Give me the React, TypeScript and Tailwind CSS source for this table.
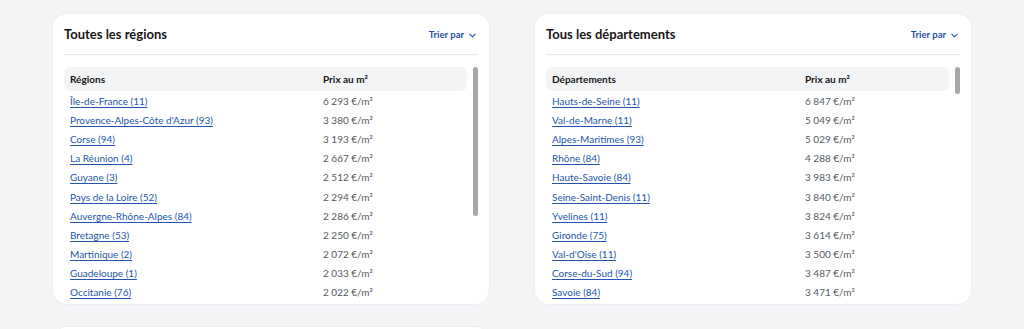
import React from "react";
import { ChevronDown } from "lucide-react";

type Row = { name: string; price: string };

const regions: Row[] = [
  { name: "Île-de-France (11)", price: "6 293 €/m²" },
  { name: "Provence-Alpes-Côte d'Azur (93)", price: "3 380 €/m²" },
  { name: "Corse (94)", price: "3 193 €/m²" },
  { name: "La Réunion (4)", price: "2 667 €/m²" },
  { name: "Guyane (3)", price: "2 512 €/m²" },
  { name: "Pays de la Loire (52)", price: "2 294 €/m²" },
  { name: "Auvergne-Rhône-Alpes (84)", price: "2 286 €/m²" },
  { name: "Bretagne (53)", price: "2 250 €/m²" },
  { name: "Martinique (2)", price: "2 072 €/m²" },
  { name: "Guadeloupe (1)", price: "2 033 €/m²" },
  { name: "Occitanie (76)", price: "2 022 €/m²" },
];

const departements: Row[] = [
  { name: "Hauts-de-Seine (11)", price: "6 847 €/m²" },
  { name: "Val-de-Marne (11)", price: "5 049 €/m²" },
  { name: "Alpes-Maritimes (93)", price: "5 029 €/m²" },
  { name: "Rhône (84)", price: "4 288 €/m²" },
  { name: "Haute-Savoie (84)", price: "3 983 €/m²" },
  { name: "Seine-Saint-Denis (11)", price: "3 840 €/m²" },
  { name: "Yvelines (11)", price: "3 824 €/m²" },
  { name: "Gironde (75)", price: "3 614 €/m²" },
  { name: "Val-d'Oise (11)", price: "3 500 €/m²" },
  { name: "Corse-du-Sud (94)", price: "3 487 €/m²" },
  { name: "Savoie (84)", price: "3 471 €/m²" },
];

const PriceCard: React.FC<{
  title: string;
  column: string;
  rows: Row[];
  thumb: string;
}> = ({ title, column, rows, thumb }) => {
  return (
    <div className="bg-white rounded-[14px] h-[290px] px-[11px] flex flex-col overflow-hidden shadow-[0_0_0_1px_#eceef1]">
      <div className="h-[41px] shrink-0 flex items-center justify-between border-b border-[#e5e7eb] pt-[2px]">
        <h2 className="text-[13px] font-bold text-[#161616]">{title}</h2>
        <button className="flex items-center gap-[3px] text-[9.5px] font-bold text-[#1f4fa3]">
          Trier par
          <ChevronDown className="w-[11px] h-[11px]" strokeWidth={2.2} />
        </button>
      </div>
      <div className="flex gap-[6px] mt-[12px] flex-1 overflow-hidden">
        <div className="flex-1 flex flex-col">
          <div className="h-[24px] shrink-0 rounded-md bg-[#f3f4f6] grid grid-cols-[253px_1fr] items-center px-[6px] text-[10px] font-bold text-[#161616]">
            <span>{column}</span>
            <span>Prix au m²</span>
          </div>
          {rows.map((r) => (
            <div
              key={r.name}
              className="h-[19.2px] shrink-0 grid grid-cols-[253px_1fr] items-center px-[6px] text-[10px] pt-[1px]"
            >
              <a href="#" className="text-[#2456ad] underline underline-offset-[2px] w-fit">
                {r.name}
              </a>
              <span className="text-[#555a61]">{r.price}</span>
            </div>
          ))}
        </div>
        <div className="w-[5px] shrink-0">
          <div className={`w-[5px] rounded-full bg-[#a8a8a8] ${thumb}`} />
        </div>
      </div>
    </div>
  );
};

export default function App() {
  return (
    <div
      className="h-screen bg-[#f3f4f6] pt-[14px] overflow-hidden"
      style={{ fontFamily: "Lato, 'Noto Sans', sans-serif" }}
    >
      <div className="mx-auto w-[918px] grid grid-cols-2 gap-[46px]">
        <PriceCard title="Toutes les régions" column="Régions" rows={regions} thumb="h-[149px]" />
        <PriceCard title="Tous les départements" column="Départements" rows={departements} thumb="h-[27px]" />
      </div>
      <div className="mx-auto w-[918px] grid grid-cols-2 gap-[46px] mt-[23px]">
        <div className="bg-white rounded-t-[14px] h-[20px] shadow-[0_0_0_1px_#eceef1]" />
        <div />
      </div>
    </div>
  );
}
